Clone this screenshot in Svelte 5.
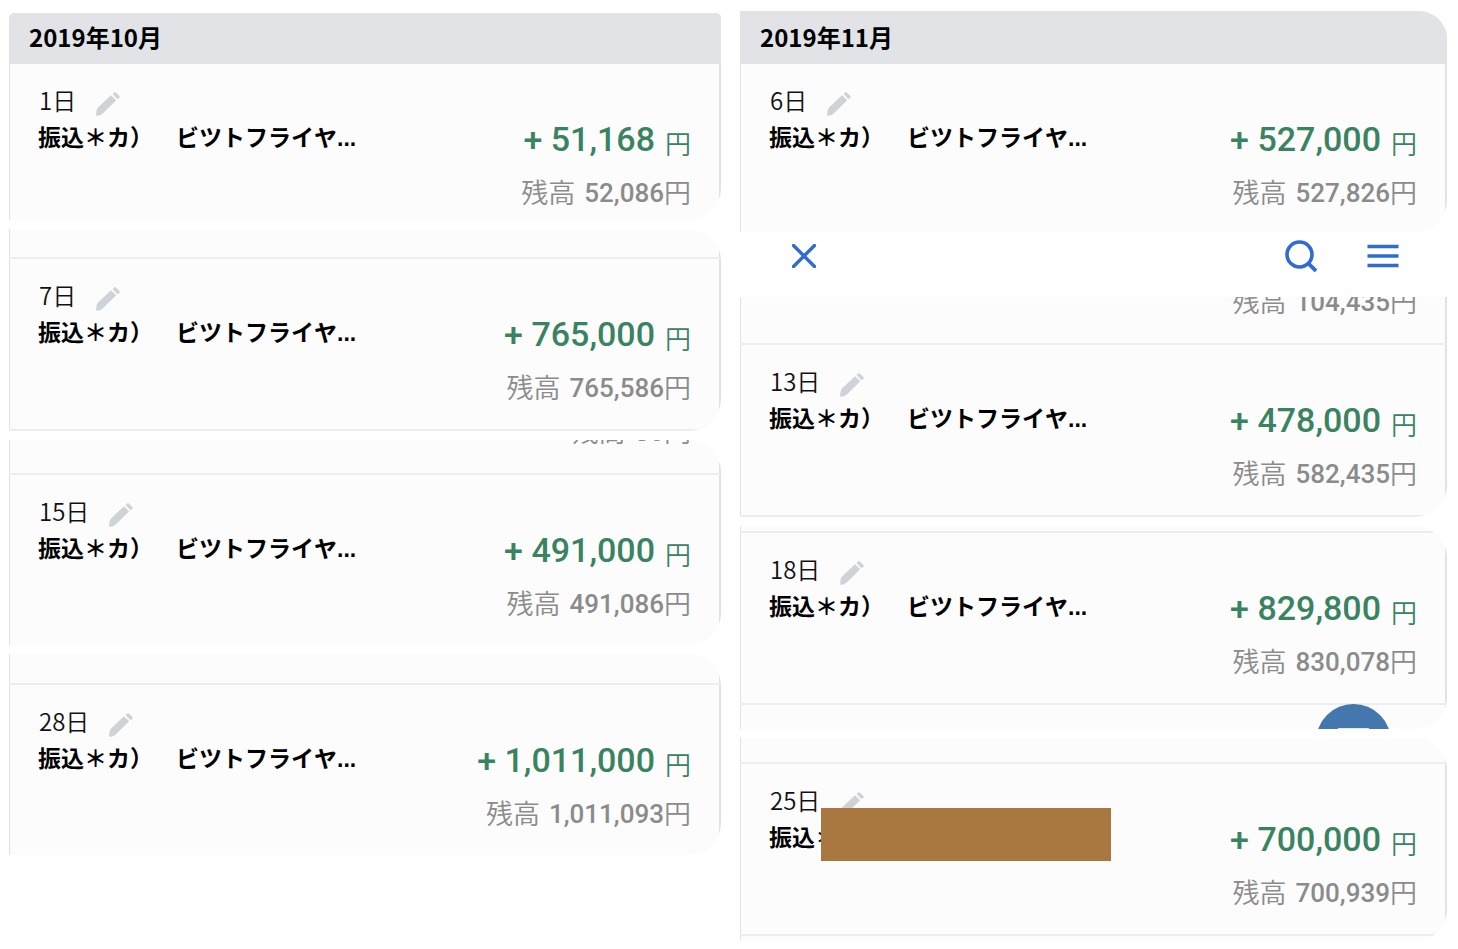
<script>
  const october = {
    title: '2019年10月',
    strips: [
      { day: '1日', amount: '51,168', balance: '52,086', kind: 'first' },
      { day: '7日', amount: '765,000', balance: '765,586', kind: 'framed', lead: 28, closed: true },
      { day: '15日', amount: '491,000', balance: '491,086', kind: 'plain', lead: 33, previous: '86' },
      { day: '28日', amount: '1,011,000', balance: '1,011,093', kind: 'plain', lead: 29 },
    ],
  };
  const november = {
    title: '2019年11月',
    strips: [
      { day: '6日', amount: '527,000', balance: '527,826', kind: 'first', nav: true },
      { day: '13日', amount: '478,000', balance: '582,435', kind: 'scrolled', lead: 46, previous: '104,435', closed: true },
      { day: '18日', amount: '829,800', balance: '830,078', kind: 'plain', lead: 5, closed: true, trail: 24, fab: true },
      { day: '25日', amount: '700,000', balance: '700,939', kind: 'plain', lead: 24, closed: true, trail: 5, masked: true },
    ],
  };
  const months = [october, november];
</script>

{#snippet balanceLine(value)}
  <p class="balance"><span class="jp">残高</span><span class="num">{value}</span><span class="jp">円</span></p>
{/snippet}

<main>
  {#each months as month, m}
    <section class="month" class:late={m === 1}>
      {#each month.strips as s, i}
        <article class="strip {s.kind}">
          {#if i === 0}
            <h2>{month.title}</h2>
          {/if}
          {#if s.lead}
            <div class="lead" style="height: {s.lead}px">
              {#if s.previous}{@render balanceLine(s.previous)}{/if}
            </div>
          {/if}
          <div class="row" class:divided={s.lead} class:closed={s.closed}>
            <div class="info">
              <div class="date">
                <span>{s.day}</span>
                <button class="edit" aria-label="編集">
                  <svg width="24" height="24" viewBox="0 0 24 24">
                    <path d="M0.3 23.7Q-0.3 18.2 2 15.4L15 3.2L20.2 8.3L7 21.2Q4.400 23.8 0.3 23.7Z" />
                    <path d="M16.500 2.100L18.200 0.500Q19 -0.200 19.900 0.600L23.400 4Q24.100 4.900 23.400 5.700L21.600 7.200Z" />
                  </svg>
                </button>
              </div>
              <p class="name">振込＊カ）　ビツトフライヤ<span>...</span></p>
              {#if s.masked}<div class="mask"></div>{/if}
            </div>
            <div class="money">
              <p class="amount"><span>+ {s.amount}</span><span class="unit">円</span></p>
              {@render balanceLine(s.balance)}
            </div>
          </div>
          {#if s.trail}<div style="height: {s.trail}px"></div>{/if}
          {#if s.fab}
            <button class="fab" aria-label="メニューを開く"><span></span></button>
          {/if}
        </article>
        {#if s.nav}
          <nav>
            <button class="close" aria-label="閉じる">
              <svg width="24" height="24" viewBox="0 0 24 24"><path d="M1.500 1.500L22.500 22.500M22.500 1.500L1.500 22.500" stroke-width="3.400" stroke-linecap="round" /></svg>
            </button>
            <button aria-label="検索">
              <svg width="32" height="32" viewBox="0 0 32 32"><circle cx="14.500" cy="14.500" r="12.500" stroke-width="3.600" /><path d="M23.300 23.300L31 31" stroke-width="3.800" /></svg>
            </button>
            <button aria-label="メニュー">
              <svg width="32" height="24" viewBox="0 0 32 24"><path d="M0.500 2.500H31.500M0.500 12H31.500M0.500 21.500H31.500" stroke-width="3.600" /></svg>
            </button>
          </nav>
        {/if}
      {/each}
    </section>
  {/each}
</main>

<style>
  :global(body) {
    background: #fff;
  }
  main {
    display: grid;
    grid-template-columns: 712fr 707fr;
    gap: 19px;
    align-items: start;
    padding: 11px 11px 8px 9px;
    font-family: 'Noto Sans CJK JP', sans-serif;
    color: #111;
  }
  h2,
  p {
    margin: 0;
  }
  button {
    display: flex;
    padding: 0;
    border: 0;
    background: none;
    cursor: pointer;
  }
  .month {
    display: flex;
    flex-direction: column;
    gap: 9px;
    padding-top: 2px;
  }
  .month.late {
    padding-top: 0;
  }
  .strip {
    position: relative;
    overflow: hidden;
    background:
      linear-gradient(#e0e1e8, #e0e1e8) left / 1px 100% no-repeat,
      linear-gradient(#e0e1e8, #e0e1e8) right / 2px 100% no-repeat,
      #fcfcfd;
    border-radius: 0 32px 32px 0;
  }
  .first {
    border-radius: 5px 5px 32px 0;
  }
  .late .first {
    border-radius: 0 28px 32px 0;
  }
  .scrolled {
    border-radius: 0 0 32px 0;
  }
  h2 {
    padding: 0 20px 4px;
    background: #e2e3e7;
    font-size: 24px;
    line-height: 47px;
    font-weight: 700;
    color: #000;
  }
  .late h2 {
    padding-bottom: 2px;
    line-height: 51px;
  }
  .lead {
    display: flex;
    flex-direction: column;
    justify-content: flex-end;
    align-items: flex-end;
    box-sizing: border-box;
    padding: 0 30px 25px 0;
    overflow: hidden;
  }
  .lead:not(:has(p)) {
    padding: 0;
  }
  .row {
    display: flex;
    justify-content: space-between;
    box-sizing: border-box;
    padding: 0 30px 0 29px;
  }
  .divided {
    border-top: 2px solid #ededf0;
  }
  .closed {
    padding-bottom: 25px;
    border-bottom: 2px solid #ededf0;
  }
  .first .row {
    padding-bottom: 11px;
  }
  .late .first .row {
    padding-bottom: 23px;
  }
  .plain .row:not(.closed) {
    padding-bottom: 25px;
  }
  .info {
    position: relative;
    padding-top: 22px;
  }
  .date {
    display: flex;
    gap: 20px;
    padding-left: 1px;
    font-size: 24px;
    line-height: 28px;
    font-weight: 350;
  }
  .edit {
    padding-top: 6px;
    height: 28px;
  }
  .edit svg {
    fill: #ced3d8;
    flex: none;
  }
  .name {
    padding-top: 8px;
    font-size: 23px;
    line-height: 28px;
    font-weight: 700;
    color: #000;
    white-space: nowrap;
    text-spacing-trim: space-all;
    font-kerning: none;
  }
  .name span {
    font-family: 'Liberation Sans', sans-serif;
  }
  .mask {
    position: absolute;
    left: 52px;
    top: 44px;
    width: 290px;
    height: 53px;
    background: #a97840;
  }
  .money {
    display: flex;
    flex-direction: column;
    align-items: flex-end;
    gap: 18px;
    padding-top: 55px;
    white-space: nowrap;
  }
  .amount {
    display: flex;
    gap: 10px;
    font: 500 34px/40px Roboto, sans-serif;
    color: #3a8361;
  }
  .unit {
    padding-top: 5px;
    font: 350 26px/38px 'Noto Sans CJK JP', sans-serif;
    height: 35px;
  }
  .balance {
    display: flex;
    height: 32px;
    flex: none;
    color: #8b8b8b;
  }
  .jp {
    font-size: 27px;
    line-height: 30px;
    font-weight: 350;
  }
  .num {
    font: 500 26px/32px Roboto, sans-serif;
  }
  .jp + .num {
    padding-left: 9px;
  }
  nav {
    display: flex;
    align-items: center;
    gap: 50px;
    height: 47px;
    margin: -9px 0;
    padding: 0 48px 18px 52px;
  }
  nav svg {
    fill: none;
    stroke: #2f6bd3;
  }
  .close {
    margin-right: auto;
  }
  .fab {
    position: absolute;
    top: 178px;
    right: 56px;
    width: 75px;
    height: 75px;
    justify-content: center;
    border-radius: 50%;
    background: #4477ad;
  }
  .fab span {
    width: 31px;
    height: 3px;
    margin-top: 24px;
    background: #dfe9f4;
  }
</style>
